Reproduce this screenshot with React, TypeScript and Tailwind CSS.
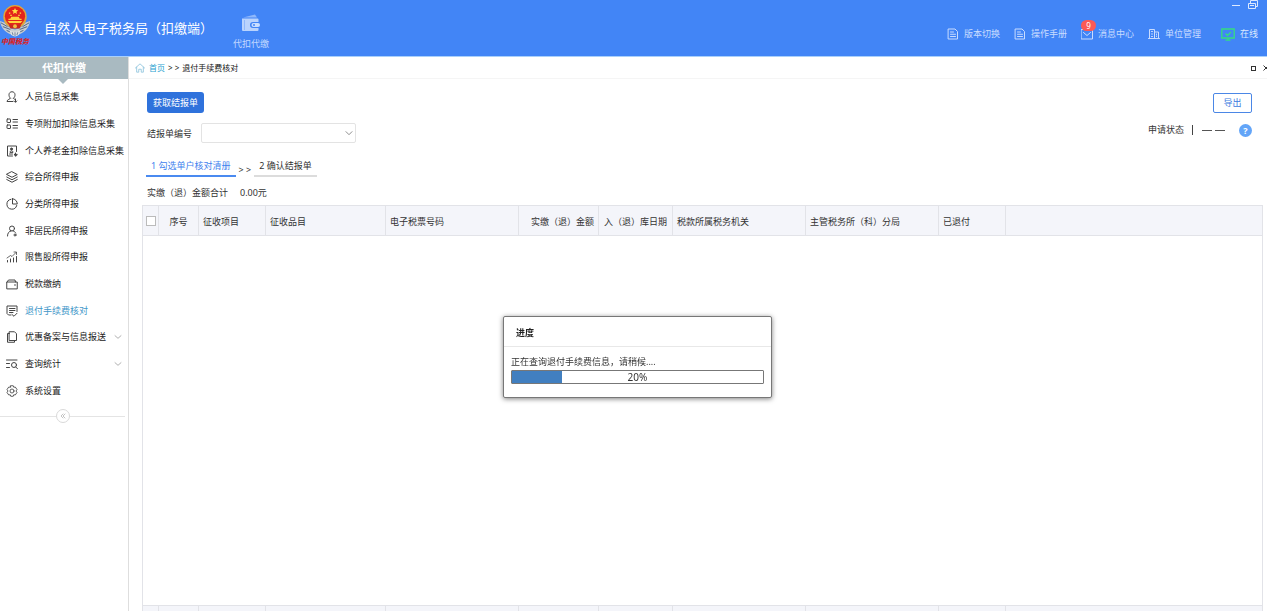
import React from "react";

type IconProps = { children: React.ReactNode; className?: string };

function Icon({ children, className = "size-3" }: IconProps) {
  return (
    <svg
      viewBox="0 0 24 24"
      fill="none"
      stroke="currentColor"
      strokeWidth="2"
      strokeLinecap="round"
      strokeLinejoin="round"
      aria-hidden="true"
      className={`shrink-0 ${className}`}
    >
      {children}
    </svg>
  );
}

const documentIcon = (
  <>
    <path d="M3 2h13l5 5v15H3z" />
    <path d="M7 8h6M7 12.500h10M7 17h10" />
  </>
);

const mailIcon = (
  <>
    <path d="M1 3h22v19H1z" />
    <path d="M5 9l7 6 7-6" />
  </>
);

const buildingIcon = (
  <>
    <path d="M3 21V3h10v18M13 8h8v13M1 21h22" />
    <path d="M7 7h2M7 12h2M7 17h2M17 12v1M17 16v1" />
  </>
);

type MenuItem = { label: string; icon: React.ReactNode; active?: boolean; expandable?: boolean };

const menu: MenuItem[] = [
  {
    label: "人员信息采集",
    icon: (
      <>
        <path d="M9 14.5C6.500 12.500 6 10 6 7.500 6 4 8.500 1.500 12 1.500S18 4 18 7.500c0 2.500-.5 5-3 7" />
        <path d="M9 14.500c0 2-7 2-7 6.500h12M15 14.500c0 1.500 2 2 4 3" />
        <path d="M19 16v6M16.500 20l2.500 2.500 2.500-2.500" />
      </>
    ),
  },
  {
    label: "专项附加扣除信息采集",
    icon: (
      <>
        <rect x="2" y="2" width="7" height="7" rx="1" />
        <rect x="2" y="14" width="7" height="7" rx="1" />
        <path d="M14 3h9M14 8h9M14 15h9M14 20h9" />
      </>
    ),
  },
  {
    label: "个人养老金扣除信息采集",
    icon: (
      <>
        <path d="M13 22H3V2h18v11" />
        <circle cx="11" cy="8" r="2" fill="currentColor" />
        <path d="M8 14c0-3.500 6-3.500 6 0zM7 18h6" />
        <path d="M19 16v5M17 19l2 3 3-3" strokeWidth="2.500" />
      </>
    ),
  },
  {
    label: "综合所得申报",
    icon: (
      <>
        <path d="M12 1.500L22.500 7 12 12.500 1.500 7z" />
        <path d="M1.500 12L12 17.500 22.500 12M1.500 17L12 22.500 22.500 17" />
      </>
    ),
  },
  {
    label: "分类所得申报",
    icon: (
      <>
        <path d="M10 2.500a10 10 0 1 0 11.500 12.500" />
        <path d="M13 1.500V12h9.500A10 10 0 0 0 13 1.500z" />
      </>
    ),
  },
  {
    label: "非居民所得申报",
    icon: (
      <>
        <circle cx="12" cy="7" r="5" />
        <path d="M3 22c0-6 3-9.500 7-10M14 12c2.500.5 4.500 2 5.500 4" />
        <circle cx="18" cy="20" r="2" />
      </>
    ),
  },
  {
    label: "限售股所得申报",
    icon: (
      <>
        <path d="M3 22v-3M9 22v-6M15 22v-8M21 22V11" />
        <path d="M2 14l7-5 3 2 8-8M16 2h5v5" strokeWidth="1.600" />
      </>
    ),
  },
  {
    label: "税款缴纳",
    icon: (
      <>
        <path d="M1.500 21V8h21v13z" />
        <path d="M2 8l3-4h13l1 4M17 14h2" />
      </>
    ),
  },
  {
    label: "退付手续费核对",
    active: true,
    icon: (
      <>
        <path d="M10 20H5l-3-3V2h20v11" />
        <path d="M7 7h11M7 11h11M7 15h7" />
        <path d="M12 19l4 3.500 6-6" />
      </>
    ),
  },
  {
    label: "优惠备案与信息报送",
    expandable: true,
    icon: (
      <>
        <path d="M7 1.500h10l4 4V19H7z" />
        <path d="M7 5H3v17.500h14V19" />
      </>
    ),
  },
  {
    label: "查询统计",
    expandable: true,
    icon: (
      <>
        <path d="M1 4h21M1 11h6M1 19h6" />
        <circle cx="16" cy="14" r="5" />
        <path d="M19.500 18L23 21.500" />
      </>
    ),
  },
  {
    label: "系统设置",
    icon: (
      <>
        <path d="M9.500 1.500h5l1 3 3-.5 3.500 5-2 3 2 3-3.500 5-3-.5-1 3h-5l-1-3-3 .5L2 15l2-3-2-3 3.500-5 3 .5z" strokeWidth="1.700" />
        <circle cx="12" cy="12" r="4" strokeWidth="1.700" />
      </>
    ),
  },
];

function Emblem() {
  return (
    <div className="flex w-[30px] shrink-0 flex-col items-center">
      <svg viewBox="0 0 32 34" className="h-[34px] w-[30px]" aria-hidden="true">
        <path d="M0 17c1 8 6 13 16 16 10-3 15-8 16-16l-6 2c-2 4-5 6-10 7-5-1-8-3-10-7z" fill="#c8cdd1" />
        <path d="M1 19l7 4M3 23l8 3M7 27l7 3M31 19l-7 4M29 23l-8 3M25 27l-7 3" stroke="#4a6180" strokeWidth="1" />
        <path d="M10 27c4 2 8 2 12 0l-2 5c-3 2-5 2-8 0z" fill="#dfe2e3" />
        <path d="M13 29l1 3M16 29v4M19 29l-1 3" stroke="#6b7d97" />
        <circle cx="16" cy="12.500" r="12.500" fill="#e0a63a" />
        <circle cx="16" cy="12" r="10.800" fill="#e3241b" />
        <path d="M16 3l1 2.200 2.400.3-1.800 1.700.5 2.300-2.100-1.200-2.100 1.200.5-2.300-1.800-1.700 2.400-.3z" fill="#ffdf45" />
        <path d="M9.500 8.500H11M21 8.500h1.500M11 11h1.500M19.500 11H21" stroke="#ffdf45" strokeWidth="1.300" />
        <path d="M9 16h14v-1.500h-2l-1-2h-8l-1 2H9zM8 17h16l-2 2H10z" fill="#ffd33d" />
        <path d="M9 20c2 2 12 2 14 0l-2 5H11z" fill="#c9281d" />
        <circle cx="16" cy="22.500" r="2" fill="#f0c244" />
      </svg>
      <span className="-mt-px text-[7px] leading-[10px] font-black whitespace-nowrap text-[#d8262b] italic">中国税务</span>
    </div>
  );
}

function HeaderLink({ label, icon, badge }: { label: string; icon: React.ReactNode; badge?: string }) {
  return (
    <a href="#" className="relative flex items-center gap-[5px] text-[#c9dcff]">
      <Icon>{icon}</Icon>
      {badge && (
        <span className="absolute -top-[7px] left-0 flex h-[11px] w-[15px] items-center justify-center rounded-full bg-[#fb5a55] text-[8px] leading-none text-white">
          {badge}
        </span>
      )}
      <span>{label}</span>
    </a>
  );
}

function TopBar() {
  return (
    <header className="relative flex h-[57px] shrink-0 items-start border-b border-[#a9d0fb] bg-[#4285f6] text-white">
      <div className="flex pt-1">
        <Emblem />
      </div>
      <h1 className="ml-[14px] pt-[18px] text-[13px] leading-5 whitespace-nowrap">自然人电子税务局（扣缴端）</h1>
      <a href="#" className="ml-5 flex flex-col items-center pt-[14px] text-[#c3d9ff]">
        <svg viewBox="0 0 20 18" className="h-[18px] w-5" aria-hidden="true">
          <path d="M2 3.500L14 .5l2 3z" fill="#8fb8fb" />
          <path d="M1 4.500h15.500a1 1 0 0 1 1 1V8H12a2.500 2.500 0 0 0 0 6h5.500v2a1 1 0 0 1-1 1H2a1 1 0 0 1-1-1z" fill="#b9d3fd" />
          <rect x="10.500" y="9" width="8.500" height="4" rx="2" fill="#c9deff" />
          <circle cx="13" cy="11" r="1" fill="#4285f6" />
          <path d="M3.500 6v10" stroke="#8fb8fb" />
        </svg>
        <span className="mt-[6px] leading-3">代扣代缴</span>
      </a>
      <nav className="ml-auto flex items-center gap-[14px] pt-[27px] pr-[9px] leading-[14px] whitespace-nowrap">
        <HeaderLink label="版本切换" icon={documentIcon} />
        <HeaderLink label="操作手册" icon={documentIcon} />
        <HeaderLink label="消息中心" icon={mailIcon} badge="9" />
        <HeaderLink label="单位管理" icon={buildingIcon} />
        <span className="ml-[6px] flex items-center gap-[5px] text-[#dce9ff]">
          <svg viewBox="0 0 14 13" fill="none" stroke="#35dd80" strokeWidth="1.300" className="h-[13px] w-[14px]" aria-hidden="true">
            <path d="M.8 1h12.400v9H.8zM4.500 12.200h5M7 10v2M4.500 5.500l2 2 3.500-3.500" />
          </svg>
          <span>在线</span>
        </span>
      </nav>
      <div className="absolute top-0 right-0 flex items-start gap-2 overflow-hidden text-[#dce9ff]">
        <button type="button" aria-label="最小化" className="mt-[5px] h-px w-2 bg-[#dce9ff]" />
        <button type="button" aria-label="还原" className="mr-[9px]">
          <svg viewBox="0 0 10 9" fill="none" stroke="currentColor" className="h-[9px] w-[10px]" aria-hidden="true">
            <path d="M.5 3.500h7v5h-7zM2.500 3V.5h7v6H8M2 5.500h4" />
          </svg>
        </button>
      </div>
    </header>
  );
}

function Sidebar() {
  return (
    <aside className="flex w-[129px] shrink-0 flex-col border-r border-[#dedede] bg-white">
      <div className="relative flex h-[22px] shrink-0 items-center justify-center bg-[#a9bac1] text-[11px] font-bold text-white">
        代扣代缴
        <svg viewBox="0 0 10 5" className="absolute top-full left-[58px] h-[5px] w-[10px]" aria-hidden="true">
          <path d="M0 0h10L5 5z" fill="#a9bac1" />
        </svg>
      </div>
      <nav className="mt-[5px]">
        <ul className="grid h-[320px] grid-rows-12">
          {menu.map((item) => (
            <li key={item.label} className="flex">
              <a
                href="#"
                className={`flex flex-1 items-center gap-[7px] pl-[6px] whitespace-nowrap ${item.active ? "text-[#3f97c9]" : "text-[#222]"}`}
              >
                <Icon className="size-3 text-[#444]">{item.icon}</Icon>
                <span>{item.label}</span>
                {item.expandable && (
                  <Icon className="mr-[6px] ml-auto size-2 text-[#888]">
                    <path d="M3 8l9 8 9-8" />
                  </Icon>
                )}
              </a>
            </li>
          ))}
        </ul>
      </nav>
      <div className="mt-[5px] flex items-center pr-[3px]">
        <span className="h-px flex-1 bg-[#e4e4e4]" />
        <button type="button" aria-label="收起" className="flex size-[14px] items-center justify-center rounded-full border border-[#d9d9d9] text-[#888]">
          <Icon className="size-[6px]">
            <path d="M12 4l-8 8 8 8M20 4l-8 8 8 8" />
          </Icon>
        </button>
        <span className="h-px flex-1 bg-[#e4e4e4]" />
      </div>
    </aside>
  );
}

function Breadcrumb() {
  return (
    <div className="flex h-[22px] shrink-0 items-center border-b border-[#f5f5f5] pt-px pl-[6px] text-[8px]">
      <Icon className="size-[10px] text-[#8cc3dc]">
        <path d="M1 12L12 2l11 10M4 10v12h5v-7h6v7h5V10" />
      </Icon>
      <a href="#" className="ml-1 text-[#1f9fd0]">首页</a>
      <span className="ml-[3px] text-[#222]">&gt; &gt;</span>
      <span className="ml-[3px] text-[#111]">退付手续费核对</span>
      <div className="ml-auto flex items-center gap-[7px]">
        <button type="button" aria-label="最大化" className="size-[5px] border border-[#333]" />
        <button type="button" aria-label="关闭">
          <svg viewBox="0 0 4 6" fill="none" stroke="#333" className="h-[6px] w-1" aria-hidden="true">
            <path d="M.5.500l5 5M.5 5.500l5-5" />
          </svg>
        </button>
      </div>
    </div>
  );
}

function Toolbar() {
  return (
    <div className="flex justify-between pt-[13px] pr-[15px] pl-[18px]">
      <div className="flex flex-col items-start">
        <button type="button" className="h-[21px] rounded-[3px] bg-[#2f72dc] px-[6px] text-white">
          获取结报单
        </button>
        <div className="mt-[10px] flex items-center gap-[9px]">
          <label htmlFor="statement" className="pt-[2px]">结报单编号</label>
          <div className="relative flex items-center">
            <select id="statement" className="h-5 w-[155px] appearance-none rounded-xs border border-[#e3e3e3] bg-white px-2 pr-5" />
            <Icon className="pointer-events-none absolute right-[3px] size-2 text-[#555]">
              <path d="M3 8l9 9 9-9" />
            </Icon>
          </div>
        </div>
      </div>
      <div className="flex flex-col items-end">
        <button type="button" className="mt-px h-[20px] w-[39px] rounded-xs border border-[#4b87e6] text-[#3c7be0]">
          导出
        </button>
        <div className="mt-[10px] flex items-center">
          <span>申请状态</span>
          <span className="ml-2 h-[10px] w-px bg-[#444]" />
          <span className="ml-[9px] flex items-center gap-[3px]">
            <span className="h-px w-[10px] bg-[#555]" />
            <span className="h-px w-[10px] bg-[#555]" />
          </span>
          <button type="button" aria-label="帮助" className="ml-[14px] flex size-[13px] items-center justify-center rounded-full bg-[#63a5f8] text-[9px] leading-none font-bold text-white">
            ?
          </button>
        </div>
      </div>
    </div>
  );
}

const columns = [
  { label: "序号", width: "w-[40px]", align: "text-center" },
  { label: "征收项目", width: "w-[67px]", align: "text-left" },
  { label: "征收品目", width: "w-[120px]", align: "text-left" },
  { label: "电子税票号码", width: "w-[133px]", align: "text-left" },
  { label: "实缴（退）金额", width: "w-[80px]", align: "text-right" },
  { label: "入（退）库日期", width: "w-[74px]", align: "text-center" },
  { label: "税款所属税务机关", width: "w-[133px]", align: "text-left" },
  { label: "主管税务所（科）分局", width: "w-[133px]", align: "text-left" },
  { label: "已退付", width: "w-[67px]", align: "text-left" },
];

function DataTable() {
  return (
    <div className="mt-[5px] mr-1 ml-[13px] flex min-h-0 flex-1">
      <table className="h-full w-full table-fixed border-collapse border-x border-t border-[#e2e3e8]">
        <thead>
          <tr className="h-[30px] border-b border-[#e2e3e8] bg-[#f4f5fa]">
            <th className="w-4 border-r border-[#e2e3e8] p-0">
              <input type="checkbox" aria-label="全选" className="mx-auto block size-[10px] appearance-none border border-[#bbb] bg-white checked:bg-[#2f72dc]" />
            </th>
            {columns.map((column) => (
              <th
                key={column.label}
                className={`${column.width} ${column.align} border-r border-[#e2e3e8] px-1 pt-[2px] pb-0 font-normal whitespace-nowrap`}
              >
                {column.label}
              </th>
            ))}
            <th />
          </tr>
        </thead>
        <tbody>
          <tr>
            <td colSpan={columns.length + 2} />
          </tr>
        </tbody>
        <tfoot>
          <tr className="h-[6px] border-t border-[#e2e3e8] bg-[#f4f5fa]">
            <td className="border-r border-[#e2e3e8] p-0" />
            {columns.map((column) => (
              <td key={column.label} className="border-r border-[#e2e3e8] p-0" />
            ))}
            <td className="p-0" />
          </tr>
        </tfoot>
      </table>
    </div>
  );
}

function ProgressDialog({ percent }: { percent: number }) {
  return (
    <div className="pointer-events-none fixed inset-0 flex items-center justify-center pt-[103px] pl-2">
      <div
        role="dialog"
        aria-labelledby="progress-title"
        className="pointer-events-auto w-[269px] rounded-xs border border-[#777] bg-white shadow-[0_1px_5px_rgba(0,0,0,0.5)]"
      >
        <h2 id="progress-title" className="border-b border-[#e8e8e8] px-3 pt-[9px] pb-[6px] text-[9px] leading-[14px] font-bold text-[#222]">
          进度
        </h2>
        <div className="px-[7px] pt-2 pb-[13px]">
          <p className="leading-[14px]">正在查询退付手续费信息，请稍候....</p>
          <div
            role="progressbar"
            aria-valuenow={percent}
            aria-labelledby="progress-title"
            className="relative mt-px h-[14px] rounded-[1px] border border-[#777] bg-white"
          >
            <div className="h-full bg-[#417fc0]" style={{ width: `${percent}%` }} />
            <span className="absolute inset-0 flex items-center justify-center text-[10px] leading-none">{percent}%</span>
          </div>
        </div>
      </div>
    </div>
  );
}

export default function App() {
  return (
    <div className="flex h-screen flex-col overflow-hidden bg-white font-['Noto_Sans','Noto_Sans_CJK_SC',sans-serif] text-[9px] leading-[14px] text-[#333]">
      <TopBar />
      <div className="flex min-h-0 flex-1">
        <Sidebar />
        <main className="flex min-w-0 flex-1 flex-col">
          <Breadcrumb />
          <Toolbar />
          <div className="mt-4 flex items-end pl-[17px]">
            <a href="#" className="border-b-2 border-[#4a8af0] px-[5px] pb-[2px] text-[#3f82ee]">1 勾选单户核对清册</a>
            <span className="px-[3px]">&gt; &gt;</span>
            <a href="#" className="border-b-2 border-[#dcdcdc] px-[5px] pb-[2px]">2 确认结报单</a>
          </div>
          <p className="mt-[9px] flex gap-3 pl-[18px]">
            <span>实缴（退）金额合计</span>
            <span>0.00元</span>
          </p>
          <DataTable />
        </main>
      </div>
      <ProgressDialog percent={20} />
    </div>
  );
}
